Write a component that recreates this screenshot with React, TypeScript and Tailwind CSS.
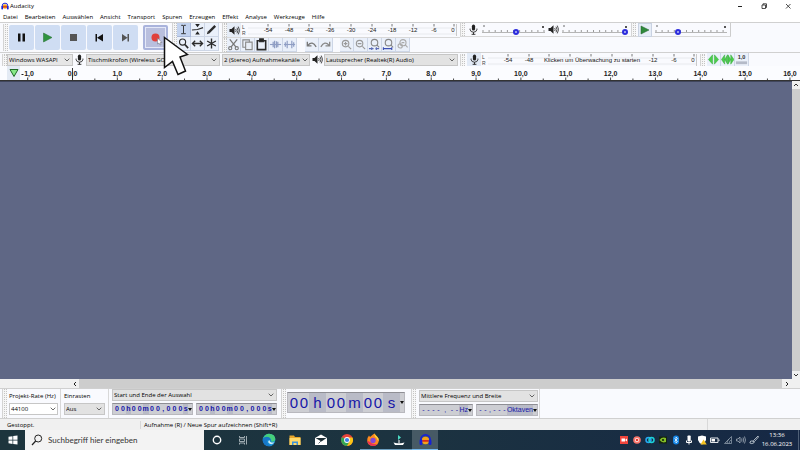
import React from "react";

const UI = "font-['Open_Sans','Noto_Sans',sans-serif]";

function Grip({ h = "h-[12px]" }: { h?: string }) {
  return (
    <span className={"flex w-[5px] shrink-0 items-center justify-center gap-px border-l border-[#d4d4d4] bg-[#f6f6f6] " + h}>
      <span className="h-full w-0 border-l border-dotted border-[#c4c4c4]" />
      <span className="h-full w-0 border-l border-dotted border-[#c4c4c4]" />
    </span>
  );
}

function Speaker({ className = "size-[11px] text-[#222]" }: { className?: string }) {
  return (
    <svg viewBox="0 0 11 11" className={"shrink-0 " + className} fill="none" stroke="currentColor">
      <path d="M0.5 4H2.5L5.5 1.3V9.7L2.5 7H0.5Z" fill="currentColor" stroke="none" />
      <path d="M6.7 4Q7.6 5.5 6.7 7M8 2.7Q10 5.5 8 8.3M9.3 1.6Q11.8 5.5 9.3 9.4" strokeWidth="0.8" />
    </svg>
  );
}

function Mic() {
  return (
    <svg viewBox="0 0 11 11" className="size-[11px] shrink-0" fill="none" stroke="#222">
      <rect x="3.9" y="0.6" width="3.2" height="6" rx="1.6" fill="#222" stroke="none" />
      <path d="M2.1 4.6V5.6Q2.6 8.2 5.5 8.2T8.9 5.6V4.6M5.5 8.2V10.4M3.6 10.3H7.4" strokeWidth="0.9" />
    </svg>
  );
}

function BigButton({ label, children, record = false }: { label: string; children: React.ReactNode; record?: boolean }) {
  return (
    <button
      aria-label={label}
      className={
        "flex h-[25px] w-[25px] items-center justify-center rounded-[2px] " +
        (record ? "ml-[4px] border-2 border-[#a9b3dc] bg-[#b9bfde] outline outline-1 -outline-offset-3 outline-[#e4e8f8]" : "bg-[#cfddf3]")
      }
    >
      <svg viewBox="0 0 25 25" className="size-[25px] shrink-0">{children}</svg>
    </button>
  );
}

function ToolButton({ label, children, active = false }: { label: string; children: React.ReactNode; active?: boolean }) {
  return (
    <button
      aria-label={label}
      className={
        "flex h-[14px] w-[14px] shrink-0 items-center justify-center border-r border-b " +
        (active ? "border-[#a9b8d8] bg-[#c3d3ef]" : "border-[#cdd6e6] bg-[#eaf0fa]")
      }
    >
      <svg viewBox="0 0 14 14" className="size-[13px] shrink-0" fill="none" stroke="#2b2b2b" strokeWidth="1.2">
        {children}
      </svg>
    </button>
  );
}

function Meter({ label, ticks, width, message }: { label: string; ticks: [number, string][]; width: string; message?: string }) {
  const all = [20, 41, 61, 82, 103, 124, 144, 165, 186, 206];
  return (
    <div className={"flex h-[14px] " + width} aria-label={label}>
      <div className="flex w-[6px] flex-col justify-center font-['Liberation_Sans',sans-serif] text-[5px] leading-[6px] text-[#444]">
        <span>L</span>
        <span>R</span>
      </div>
      <svg viewBox="0 0 209 14" className="h-[14px] w-[209px]">
        <path d="M0 5H209M0 11H209" stroke="#e8eaee" />
        <path d="M208.500 1V13" stroke="#c9c9c9" />
        {all.map((x) => (
          <path key={x} d={`M${x} 1V3.500`} stroke="#555" strokeWidth="0.8" />
        ))}
        {ticks.map(([x, t]) => (
          <text key={t} x={x} y="9" textAnchor="middle" className="font-['Liberation_Sans',sans-serif] text-[6px]" fill="#222">{t}</text>
        ))}
        {message && (
          <text x="104" y="9" textAnchor="middle" className="font-['Liberation_Sans',sans-serif] text-[6px]" fill="#111">{message}</text>
        )}
      </svg>
    </div>
  );
}

function Slider({ label, value, width }: { label: string; value: number; width: string }) {
  return (
    <div className={"relative block h-[13px] shrink-0 " + width}>
      <svg className="absolute inset-0 size-full">
        <path d="M1 3H3" stroke="#444" strokeWidth="0.8" />
        <path d="M0 9.500H100" stroke="#b5b5b5" />
        <path d="M0.500 8H100" stroke="#999" strokeWidth="2" strokeDasharray="1 5.100" />
      </svg>
      <span className="absolute top-[3px] right-[1px] h-[2px] w-[2px] bg-[#555]" />
      <input
        type="range"
        aria-label={label}
        defaultValue={value}
        className="absolute inset-x-0 top-[6px] h-[6px] w-full appearance-none bg-transparent [&::-webkit-slider-thumb]:size-[6px] [&::-webkit-slider-thumb]:appearance-none [&::-webkit-slider-thumb]:rounded-full [&::-webkit-slider-thumb]:border-2 [&::-webkit-slider-thumb]:border-[#2c2cdc] [&::-webkit-slider-thumb]:bg-[#b8bcf4]"
      />
    </div>
  );
}

function Drop({ id, label, value, className, arrow = "right-[3px]" }: { id: string; label: string; value: string; className: string; arrow?: string }) {
  return (
    <div className={"relative shrink-0 " + className}>
      <select id={id} aria-label={label} className="block size-full appearance-none overflow-hidden border border-[#c6c6c6] bg-inherit pl-px text-[6px] leading-[8px] text-black">
        <option>{value}</option>
      </select>
      <svg viewBox="0 0 6 4" className={"pointer-events-none absolute top-1/2 h-[4px] w-[6px] -translate-y-1/2 " + arrow} fill="none" stroke="#444" strokeWidth="0.8">
        <path d="M0.700 0.700L3 3L5.300 0.700" />
      </svg>
    </div>
  );
}

function TimeField({ label, chars, className, digit }: { label: string; chars: string[]; className: string; digit: string }) {
  return (
    <div role="group" aria-label={label} className={"flex shrink-0 items-stretch border border-[#b8b8be] border-t-[#8e8e94] bg-[#cdced3] pl-px font-['Liberation_Sans',sans-serif] text-[#1616a8] " + className}>
      {chars.map((c, i) => (
        <span key={i} className={"flex items-center justify-center " + (/[0-9-]/.test(c) ? "bg-[#cdced3] " + digit : c === "," ? "flex-1 bg-[#cdced3]" : "flex-1 bg-[#b9bbc7]")}>{c}</span>
      ))}
      <button aria-label="Format" className="flex w-[4px] shrink-0 items-center justify-center">
        <svg viewBox="0 0 4 3" className="h-[3px] w-[4px]"><path d="M0 0H4L2 3Z" fill="#111" /></svg>
      </button>
    </div>
  );
}

function Ruler() {
  const units = Array.from({ length: 17 }, (_, i) => i);
  return (
    <div className="flex h-[15px] shrink-0 overflow-hidden border-b border-[#333] bg-[#fbfcff]">
      <button aria-label="Zeitachsenoptionen" className="ml-[7px] flex w-[13px] shrink-0 items-center justify-center bg-[#e3eaf4]">
        <svg viewBox="0 0 10 10" className="size-[10px]"><path d="M1 1.500H9L5 8.500Z" fill="#86e886" stroke="#1d6b25" strokeWidth="1" /></svg>
      </button>
      <svg viewBox="0 0 790 14" className="h-[14px] w-[790px] shrink-0">
        <path d="M1.500 8.500H3.500" stroke="#222" />
        <text x="9" y="10" textAnchor="middle" className="font-['Liberation_Sans',sans-serif] text-[7px] font-bold" fill="#222">1,0</text>
        {units.map((u) => (
          <g key={u}>
            <text x={52.5 + u * 44.84} y="10" textAnchor="middle" className="font-['Liberation_Sans',sans-serif] text-[7px] font-bold" fill="#222">{u + ",0"}</text>
            <path d={`M${52.5 + u * 44.84} 11.500V14M${30 + u * 44.84} 12.500V14`} stroke="#333" strokeWidth="0.9" />
          </g>
        ))}
        <path d="M7.700 11.500V14M52.500 2V14" stroke="#222" strokeWidth="0.9" />
      </svg>
    </div>
  );
}

function AudacityLogo({ className }: { className: string }) {
  return (
    <svg viewBox="0 0 14 14" className={className}>
      <circle cx="7" cy="8" r="4" fill="#f5a21b" />
      <path d="M3.500 8.500H10.500" stroke="#d8231b" strokeWidth="1.800" fill="none" />
      <path d="M2 8.500V7A5 5 0 0 1 12 7V8.500" stroke="#1620d8" strokeWidth="1.700" fill="none" />
      <rect x="0.600" y="7" width="3" height="6" rx="1.300" fill="#1620d8" />
      <rect x="10.400" y="7" width="3" height="6" rx="1.300" fill="#1620d8" />
    </svg>
  );
}

function TaskIcon({ label, children, state = "" }: { label: string; children: React.ReactNode; state?: string }) {
  return (
    <button aria-label={label} className={"flex w-[26px] items-center justify-center border-b " + (state || "border-transparent")}>
      <svg viewBox="0 0 14 14" className="size-[14px]" fill="none">{children}</svg>
    </button>
  );
}

function Tray({ label, children }: { label: string; children: React.ReactNode }) {
  return (
    <button aria-label={label} className="flex items-center">
      <svg viewBox="0 0 10 10" className="size-[10px]" fill="none">{children}</svg>
    </button>
  );
}

const menu = ["Datei", "Bearbeiten", "Auswählen", "Ansicht", "Transport", "Spuren", "Erzeugen", "Effekt", "Analyse", "Werkzeuge", "Hilfe"];
const playTicks: [number, string][] = [[20, "-54"], [41, "-48"], [61, "-42"], [82, "-36"], [103, "-30"], [124, "-24"], [144, "-18"], [165, "-12"], [186, "-6"], [205, "0"]];
const recTicks: [number, string][] = [[20, "-54"], [41, "-48"], [165, "-12"], [186, "-6"], [205, "0"]];

export default function App() {
  return (
    <div className={"relative flex h-screen w-full flex-col overflow-hidden bg-white text-[6px] leading-[8px] text-black " + UI}>
      <header className="flex h-[12px] shrink-0 items-center">
        <AudacityLogo className="ml-px size-[8px]" />
        <h1 className="ml-px flex-1">Audacity</h1>
        <div className="mr-[8px] flex gap-[16px]">
          <button aria-label="Minimieren"><svg viewBox="0 0 8 8" className="size-[8px]"><path d="M2 4.500H6" stroke="#222" /></svg></button>
          <button aria-label="Verkleinern"><svg viewBox="0 0 8 8" className="size-[8px]" fill="none" stroke="#222" strokeWidth="0.800"><path d="M2 3H5.500V6.500H2ZM3 3V1.800H6.500V5.500H5.500" /></svg></button>
          <button aria-label="Schließen"><svg viewBox="0 0 8 8" className="size-[8px]" stroke="#222" strokeWidth="0.800"><path d="M2 2L6.500 6.500M6.500 2L2 6.500" /></svg></button>
        </div>
      </header>
      <nav className="flex h-[10px] shrink-0 items-center gap-[7px] pl-[3px]">
        {menu.map((m) => <button key={m}>{m}</button>)}
      </nav>

      <section className="flex h-[30px] shrink-0 border-t border-[#d0d0d0] bg-[#f9fafe]">
        <div className="flex w-[172px] items-center gap-px pl-[3px]">
          <Grip h="h-[27px]" />
          <BigButton label="Pause"><path d="M9 8.500H11.500V16.500H9ZM13.500 8.500H16V16.500H13.500Z" fill="#111" /></BigButton>
          <BigButton label="Wiedergabe"><path d="M8.500 8L17 12.500L8.500 17Z" fill="#2f9440" stroke="#226b2e" strokeWidth="0.500" /></BigButton>
          <BigButton label="Stopp"><path d="M9 9H16V16H9Z" fill="#555" /></BigButton>
          <BigButton label="Zum Anfang"><path d="M8.500 9V16.500H10V9ZM16 9V16.500L10 12.700Z" fill="#111" /></BigButton>
          <BigButton label="Zum Ende"><path d="M9 9V16.500L14.500 12.700ZM14.500 9V16.500H16V9Z" fill="#555" /></BigButton>
          <BigButton label="Aufnahme" record>
            <circle cx="12.500" cy="12.500" r="4" fill="#e0403c" />
            <path d="M14.500 13V19L16 18L17 20L18 19.500L17.300 17.500H19Z" fill="#fff" stroke="#667" strokeWidth="0.500" />
          </BigButton>
        </div>
        <div className="flex w-[50px] shrink-0">
          <Grip h="h-[29px]" />
          <div className="grid h-[28px] grid-cols-3">
            <ToolButton label="Auswahl" active><path d="M4.500 2.500H6.500L7 3L7.500 2.500H9.500M7 3V11M4.500 11.500H9.500" strokeWidth="1" /></ToolButton>
            <ToolButton label="Hüllkurve"><path d="M1 7.500L7 7L13 5" /><path d="M4.500 1H9.500L7 4.500ZM4.500 12.500H9.500L7 9Z" fill="#222" stroke="none" /></ToolButton>
            <ToolButton label="Zeichnen"><path d="M4 10L11 3" strokeWidth="2.600" /><path d="M2 12L3 9L5 11Z" fill="#222" stroke="none" /></ToolButton>
            <ToolButton label="Zoom"><circle cx="6" cy="5.500" r="3.300" /><path d="M8.500 8L12 12" strokeWidth="1.800" /></ToolButton>
            <ToolButton label="Verschieben"><path d="M2 7H12M4.500 4L1.500 7L4.500 10M9.500 4L12.500 7L9.500 10" strokeWidth="1.400" /></ToolButton>
            <ToolButton label="Multi"><path d="M7 1.500V12.500M2.300 4.300L11.700 9.700M11.700 4.300L2.300 9.700" strokeWidth="1.500" /></ToolButton>
          </div>
        </div>
        <div className="flex w-[238px] shrink-0 flex-col">
          <div className="flex h-[14px] items-center">
            <Grip h="h-[14px]" />
            <button aria-label="Wiedergabepegel" className="mr-px flex h-[14px] w-[14px] items-center justify-center bg-[#e6edf7]"><Speaker /></button>
            <Meter label="Wiedergabe" ticks={playTicks} width="w-[216px]" />
          </div>
          <div className="flex h-[15px] items-center border-t border-[#d8d8d8]">
            <Grip h="h-[14px]" />
            <ToolButton label="Ausschneiden"><g stroke="#777"><path d="M3 1.500L9.500 9.500M11 1.500L4.500 9.500" strokeWidth="1.400" /><circle cx="3.500" cy="11" r="1.700" /><circle cx="10.500" cy="11" r="1.700" /></g></ToolButton>
            <ToolButton label="Kopieren"><g stroke="#8b8b8b"><path d="M2 2H9V10H2Z" /><path d="M5 4.500H12V12.500H5Z" fill="#e9eef6" /></g></ToolButton>
            <ToolButton label="Einfügen"><path d="M2.500 3H11.500V12.500H2.500Z" strokeWidth="1.700" /><path d="M5 1H9V4H5Z" fill="#222" /></ToolButton>
            <ToolButton label="Trimmen"><g stroke="#8f9ec4"><path d="M1 7H13" /><path d="M4.500 4V10M6 3V11M8 3.500V10.500M9.500 4V10" strokeWidth="1.300" /></g></ToolButton>
            <ToolButton label="Stille"><g stroke="#8f9ec4"><path d="M1 7H13" /><path d="M2.500 4.500V9.500M4.500 3V11M9.500 3V11M11.500 4.500V9.500" strokeWidth="1.300" /></g></ToolButton>
            <span className="w-[8px]" />
            <ToolButton label="Rückgängig"><path d="M2.500 4V8.500H7M3 8Q8 2.500 12 9.500" stroke="#777" strokeWidth="1.400" /></ToolButton>
            <ToolButton label="Wiederholen"><path d="M11.500 4V8.500H7M11 8Q6 2.500 2 9.500" stroke="#888" strokeWidth="1.400" /></ToolButton>
            <span className="w-[7px]" />
            <ToolButton label="Vergrößern"><g stroke="#999"><circle cx="6" cy="6" r="3.500" /><path d="M9 9L12 12M4 6H8M6 4V8" /></g></ToolButton>
            <ToolButton label="Verkleinern"><g stroke="#999"><circle cx="6" cy="6" r="3.500" /><path d="M9 9L12 12M4 6H8" /></g></ToolButton>
            <ToolButton label="Auswahl einpassen"><g stroke="#888"><circle cx="7" cy="5" r="3.500" /><path d="M9.500 7.500L12 10" /><path d="M1 11.500H6M8 11.500H12M4 10V13M9 10V13" stroke="#5c6cb4" /></g></ToolButton>
            <ToolButton label="Projekt einpassen"><g stroke="#888"><circle cx="7" cy="5" r="3.500" /><path d="M9.500 7.500L12 10" /><path d="M1 11.500H11M1.500 10V13M10.500 10V13" stroke="#3c50b4" /></g></ToolButton>
            <ToolButton label="Zoom umschalten"><g stroke="#aaa"><circle cx="7.500" cy="5" r="3.300" /><path d="M10 7.500L12.500 10M6 5H9" /><circle cx="4.500" cy="8.500" r="2.300" /></g></ToolButton>
          </div>
        </div>
        <div className="flex h-[14px] shrink-0 items-center border-b border-[#d8d8d8]">
          <Grip h="h-[13px]" />
          <span className="ml-[3px] mr-[3px]"><Mic /></span>
          <Slider label="Aufnahmelautstärke" value={54} width="w-[63px]" />
          <span className="mx-[3px]"><Speaker /></span>
          <Slider label="Wiedergabelautstärke" value={100} width="w-[66px]" />
          <span className="w-[3px]" />
          <Grip h="h-[13px]" />
          <button aria-label="Mit Geschwindigkeit abspielen" className="ml-[2px] mr-[3px] flex h-[14px] w-[14px] items-center justify-center border border-[#c9d2e2] bg-[#e6edf7]">
            <svg viewBox="0 0 10 10" className="size-[10px]"><path d="M1 1L9 5L1 9Z" fill="#2f8a3c" stroke="#1f5f2a" strokeWidth="0.500" /></svg>
          </button>
          <Slider label="Geschwindigkeit" value={31} width="w-[72px]" />
          <span className="ml-[3px] h-[13px] border-l border-[#ccc]" />
        </div>
      </section>

      <section className="flex h-[14px] shrink-0 items-center border-t border-[#d0d0d0] bg-[#f9fafe]">
        <span className="w-[2px]" />
        <Grip />
        <Drop id="host" label="Audio-Host" value="Windows WASAPI" className="h-[12px] w-[66px] bg-[#e6e6e6]" />
        <span className="mx-[1px]"><Mic /></span>
        <Drop id="recdev" label="Aufnahmegerät" value="Tischmikrofon (Wireless GO" className="h-[12px] w-[134px] bg-[#e2e2e2]" />
        <span className="w-[2px]" />
        <Drop id="channels" label="Aufnahmekanäle" value="2 (Stereo) Aufnahmekanäle" className="h-[12px] w-[88px] bg-[#e2e2e2]" arrow="right-[2px]" />
        <span className="ml-[2px] mr-[1px]"><Speaker /></span>
        <Drop id="playdev" label="Wiedergabegerät" value="Lautsprecher (Realtek(R) Audio)" className="h-[12px] w-[134px] bg-[#e2e2e2]" />
        <span className="w-[2px]" />
        <Grip />
        <button aria-label="Aufnahmepegel" className="ml-[2px] mr-px flex h-[13px] w-[14px] items-center justify-center bg-[#e3ebf7]"><Mic /></button>
        <Meter label="Aufnahme" ticks={recTicks} width="w-[218px]" message="Klicken um Überwachung zu starten" />
        <Grip />
        <span className="w-[2px]" />
        <ToolButton label="Zeitlupe"><path d="M6 2V12L1.500 7ZM8 2V12L12.500 7Z" fill="#4ccc4c" stroke="#30a838" strokeWidth="0.500" /></ToolButton>
        <ToolButton label="Zeitraffer"><path d="M4 2V12L0.500 7ZM7 2V12L4 7ZM7.500 2V12L10.500 7ZM10.500 2V12L14 7Z" fill="#4ccc4c" stroke="#30a838" strokeWidth="0.500" /></ToolButton>
        <ToolButton label="Geschwindigkeit 1,0">
          <path d="M1 9H13V12H1Z" fill="#b4bac8" stroke="none" />
          <text x="7" y="6.500" textAnchor="middle" className="font-['Liberation_Sans',sans-serif] text-[6px] font-bold" fill="#333" stroke="none">1,0</text>
        </ToolButton>
      </section>

      <Ruler />

      <main className="flex min-h-0 flex-1 bg-[#5f6785]">
        <div className="flex-1 border-t border-[#40465c]" />
        <div className="flex w-[8px] flex-col items-center justify-between bg-[#cdcdcd]">
          <button aria-label="Nach oben" className="flex h-[8px] w-full items-center justify-center bg-[#f0f0f0]"><svg viewBox="0 0 6 6" className="size-[6px]" fill="none" stroke="#333"><path d="M1 4L3 2L5 4" /></svg></button>
          <button aria-label="Nach unten" className="flex h-[8px] w-full items-center justify-center bg-[#f0f0f0]"><svg viewBox="0 0 6 6" className="size-[6px]" fill="none" stroke="#333"><path d="M1 2L3 4L5 2" /></svg></button>
        </div>
      </main>
      <div className="flex h-[9px] shrink-0 items-stretch bg-[#f0f0f0]">
        <button aria-label="Nach links" className="ml-[71px] flex w-[8px] items-center justify-center"><svg viewBox="0 0 6 6" className="size-[6px]" fill="none" stroke="#222"><path d="M4 1L2 3L4 5" /></svg></button>
        <div className="flex-1 bg-[#cdcdcd]" />
        <button aria-label="Nach rechts" className="mr-[8px] flex w-[10px] items-center justify-center"><svg viewBox="0 0 6 6" className="size-[6px]" fill="none" stroke="#222"><path d="M2 1L4 3L2 5" /></svg></button>
      </div>

      <section className="flex h-[30px] shrink-0 border-t border-[#d0d0d0] bg-[#f9fafe] pl-[2px]">
        <Grip h="h-[29px]" />
        <div className="ml-[2px] flex w-[49px] flex-col">
          <label htmlFor="rate" className="flex h-[14px] items-center whitespace-nowrap">Projekt-Rate (Hz)</label>
          <Drop id="rate" label="Projekt-Rate (Hz)" value="44100" className="h-[12px] w-[49px] bg-white" arrow="right-[2px]" />
        </div>
        <div className="ml-[2px] flex w-[46px] flex-col border-l border-[#d8d8d8] pl-[3px]">
          <label htmlFor="snap" className="flex h-[14px] items-center">Einrasten</label>
          <Drop id="snap" label="Einrasten" value="Aus" className="h-[12px] w-[41px] bg-[#e2e2e2]" />
        </div>
        <div className="ml-[2px] flex w-[169px] flex-col gap-[2px] border-l border-[#d8d8d8] pl-[3px]">
          <Drop id="range" label="Auswahlmodus" value="Start und Ende der Auswahl" className="h-[12px] w-[165px] bg-[#e2e2e2]" />
          <div className="flex justify-between">
            <TimeField label="Auswahlbeginn" chars={["0", "0", "h", "0", "0", "m", "0", "0", ",", "0", "0", "0", "s"]} className="h-[12px] w-[81px] text-[7px] font-bold" digit="w-[6px]" />
            <TimeField label="Auswahlende" chars={["0", "0", "h", "0", "0", "m", "0", "0", ",", "0", "0", "0", "s"]} className="h-[12px] w-[81px] text-[7px] font-bold" digit="w-[6px]" />
          </div>
        </div>
        <span className="w-[4px]" />
        <Grip h="h-[29px]" />
        <TimeField label="Position" chars={["0", "0", "h", "0", "0", "m", "0", "0", "s"]} className="mt-[3px] ml-px h-[21px] w-[118px] text-[15px]" digit="w-[10px]" />
        <span className="w-[6px]" />
        <Grip h="h-[29px]" />
        <div className="ml-[3px] flex w-[121px] flex-col gap-[2px] border-r border-[#d8d8d8] pt-px">
          <Drop id="freq" label="Frequenzmodus" value="Mittlere Frequenz und Breite" className="h-[12px] w-[119px] bg-[#e2e2e2]" />
          <div className="flex w-[119px] justify-between">
            <TimeField label="Frequenz" chars={["-", "-", "-", "-", ",", "-", "-", "Hz"]} className="h-[12px] w-[54px] text-[7px]" digit="w-[5px]" />
            <TimeField label="Breite" chars={["-", "-", ",", "-", "-", "-", "Oktaven"]} className="h-[12px] w-[62px] text-[7px]" digit="w-[5px]" />
          </div>
        </div>
      </section>

      <footer className="flex h-[12px] shrink-0 items-center border-t border-[#d0d0d0] bg-[#f0f0f0]">
        <span className="w-[141px] border-r border-[#d8d8d8] pl-[7px]">Gestoppt.</span>
        <span className="flex-1 pl-[3px]">Aufnahme (R) / Neue Spur aufzeichnen (Shift+R)</span>
        <span className="h-full w-[93px] border-l border-[#d8d8d8]" />
      </footer>

      <div className="flex h-[20px] shrink-0 items-stretch bg-linear-to-r from-[#1d353d] via-[#1c3340] to-[#162845]">
        <button aria-label="Start" className="flex w-[25px] items-center justify-center"><svg viewBox="0 0 10 10" className="size-[10px]" fill="#fff"><path d="M0.500 1.800L4.500 1.200V4.700H0.500ZM5.200 1.100L9.500 0.500V4.700H5.200ZM0.500 5.400H4.500V8.900L0.500 8.300ZM5.200 5.400H9.500V9.600L5.200 9Z" /></svg></button>
        <label className="flex w-[179px] items-center bg-[#f3f3f3] pl-[6px]">
          <svg viewBox="0 0 12 12" className="size-[12px] shrink-0" fill="none" stroke="#222"><circle cx="7.200" cy="4.500" r="3.500" /><path d="M4.700 7L1 11" strokeWidth="1.200" /></svg>
          <input aria-label="Suche" placeholder="Suchbegriff hier eingeben" className="ml-[5px] w-[140px] bg-transparent font-[Lato,'Open_Sans',sans-serif] text-[8px] leading-[12px] placeholder:text-[#333]" />
        </label>
        <TaskIcon label="Cortana"><circle cx="7" cy="7" r="3.700" stroke="#fff" strokeWidth="1.400" /></TaskIcon>
        <TaskIcon label="Aktive Anwendungen"><path d="M3.500 3V4.500H8.500V3M3.500 6H8.500V8.500H3.500ZM3.500 11.500V10H8.500V11.500M10.500 3V11.500" stroke="#aeb9be" strokeWidth="0.900" /></TaskIcon>
        <TaskIcon label="Edge"><circle cx="7" cy="7" r="6.300" fill="#168bd2" /><path d="M1 5.500Q3 0.700 7 0.700Q13.300 1 13.300 6.200Q13 9 9.500 8.700Q9 4 5 4Q2.500 4 1 5.500Z" fill="#46cf7c" /><path d="M1 5.500Q4 2.800 7 4.500Q9.500 6 8 8Q5.500 5.500 4.700 8Q4.700 12 9 13Q2 14 0.700 8Z" fill="#1877c8" /><path d="M7.500 7Q7.500 10 12.500 9.500Q9 13 6.300 9.500Q5.700 7.500 7.500 7Z" fill="#cdeefa" /></TaskIcon>
        <TaskIcon label="Explorer"><path d="M1.500 2.500H6L7 4H12.500V12H1.500Z" fill="#e8a72c" /><path d="M1.500 5H12.500V12H1.500Z" fill="#ffd96a" /><path d="M4 12V8.500H10V12H8.500V10H5.500V12Z" fill="#3c93dc" /></TaskIcon>
        <TaskIcon label="Mail"><path d="M1 5L7 1.500L13 5V12H1Z" fill="#fff" /><path d="M1.500 5H12.500L7.500 8.500Z" fill="#1b2d35" /><path d="M7 8L4.500 10.500" stroke="#1b2d35" strokeWidth="0.700" /></TaskIcon>
        <TaskIcon label="Chrome"><circle cx="7" cy="7" r="6" fill="#e8443a" /><path d="M7 7L1.800 4A6 6 0 0 0 7 13L9.600 8.500Z" fill="#34a853" /><path d="M7 4.500H12.500A6 6 0 0 1 7 13L9.600 8.500Z" fill="#fbc516" /><circle cx="7" cy="7" r="2.900" fill="#fff" /><circle cx="7" cy="7" r="2.100" fill="#3d7fe8" /></TaskIcon>
        <TaskIcon label="Firefox" state="border-[#6d9fc0]"><path d="M7 1.500Q8.500 0.500 8.700 0.500Q9 2 11 3.500Q13 5 12.800 8Q12 12.800 7 13Q1.500 12.500 1.200 7.500Q1.500 4 3 2.500L4 4Z" fill="#ff8a1e" /><path d="M8.700 0.500Q9 2 11 3.500Q13 5 12.800 8Q11 7 10.500 5Q8 4 8.700 0.500Z" fill="#ffd43c" /><path d="M1.200 7.500Q2 12.500 7 13Q10 12.900 11.700 11Q7 12 4 9Z" fill="#ec2f55" /><circle cx="7" cy="7.500" r="2.700" fill="#8446d8" /></TaskIcon>
        <TaskIcon label="Filmora" state="border-[#6d9fc0]"><path d="M6 2L9 4.500L6 7Z" fill="#4cdcc4" /><path d="M1.500 9.500L5 10.200H9L12.500 9.500L11 12H3Z" fill="#fff" /><path d="M7 7V10" stroke="#fff" /></TaskIcon>
        <button aria-label="Audacity" className="flex w-[26px] items-center justify-center border-b border-[#76b9ed] bg-[#475a65]"><AudacityLogo className="size-[13px]" /></button>
        <div className="flex-1" />
        <div className="flex gap-[3px]">
          <Tray label="Aufnahme"><path d="M1 1H9V9H1Z" fill="#f0453c" /><path d="M2.500 3.500H6V6.500H2.500ZM6 5L8 3.500V6.500Z" fill="#fff" /></Tray>
          <Tray label="Recorder"><circle cx="5" cy="5" r="3.800" fill="#f8766c" /><circle cx="5" cy="5" r="2" fill="#fff" /><circle cx="5" cy="5" r="1.300" fill="#e8382e" /></Tray>
          <Tray label="Synchronisierung"><circle cx="3.500" cy="5" r="2.500" stroke="#27a8f4" strokeWidth="1.500" /><circle cx="6.500" cy="5" r="2.500" stroke="#1cd0d8" strokeWidth="1.500" /></Tray>
          <Tray label="Nvidia"><path d="M1 1.500H9V8.500H1Z" fill="#14250e" /><path d="M1.500 5Q4 1.500 8 3V7Q4 8.500 1.500 5Z" fill="#82bd28" /><circle cx="5" cy="5" r="1.100" fill="#14250e" /></Tray>
          <Tray label="Bluetooth"><rect x="2" y="0.500" width="6" height="9" rx="3" fill="#1687e8" /><path d="M3.500 3.500L6.500 6.500L5 8V2L6.500 3.500L3.500 6.500" stroke="#fff" strokeWidth="0.700" /></Tray>
          <Tray label="Mikrofon"><rect x="3.500" y="0.500" width="3.200" height="6" rx="0.800" fill="#fff" /><path d="M2.500 5.500V7.500H7.500V5.500M5 7.500V9.500" stroke="#fff" /></Tray>
          <Tray label="Sicherheit"><path d="M1 1.500L5 0.500L9 1.500V5Q8 8 5 9.500Q2 8 1 5Z" fill="#fff" /><path d="M6.500 4.500L9.800 9.500H3.500Z" fill="#f6c321" /></Tray>
          <Tray label="Akku"><path d="M0.500 3H8V7.500H0.500ZM9 4.500V6" stroke="#e4e8ec" /><path d="M1.500 4H5V6.500H1.500Z" fill="#fff" /></Tray>
          <Tray label="WLAN"><path d="M1.500 8.500L8.500 1.500V8.500ZM4 8.500Q4 6 6 4M6 8.500Q6 6.500 8 5" stroke="#9aa7b5" strokeWidth="0.700" /></Tray>
          <Tray label="Lautstärke"><path d="M0.500 4H2L4 2V8L2 6H0.500ZM5.500 3.500Q6.500 5 5.500 6.500M7 2.500Q8.500 5 7 7.500M8.500 1.500Q10.500 5 8.500 8.500" stroke="#b4bec8" strokeWidth="0.700" /></Tray>
          <Tray label="Stift"><path d="M9 1L4.500 5.500L4 7L5.500 6.500L9.500 2ZM4 6Q1 5 0.800 8Q2.500 9.500 5.500 7.500" stroke="#ccd4dc" strokeWidth="0.800" /></Tray>
        </div>
        <button className="mr-[3px] flex w-[36px] flex-col items-center justify-center text-[6px] leading-[9px] text-white">
          <time>13:36</time>
          <time>16.06.2023</time>
        </button>
        <span className="mr-px border-l border-[#4e5f76]" />
      </div>

      <svg viewBox="0 0 26 40" className="pointer-events-none absolute top-[36px] left-[163px] h-[40px] w-[26px]">
        <path d="M1.500 1.500L24.500 18.500L17 21L22.500 35L15 38.500L9.500 25.500L1.500 31.500Z" fill="#fff" stroke="#111" strokeWidth="1.500" />
      </svg>
    </div>
  );
}
